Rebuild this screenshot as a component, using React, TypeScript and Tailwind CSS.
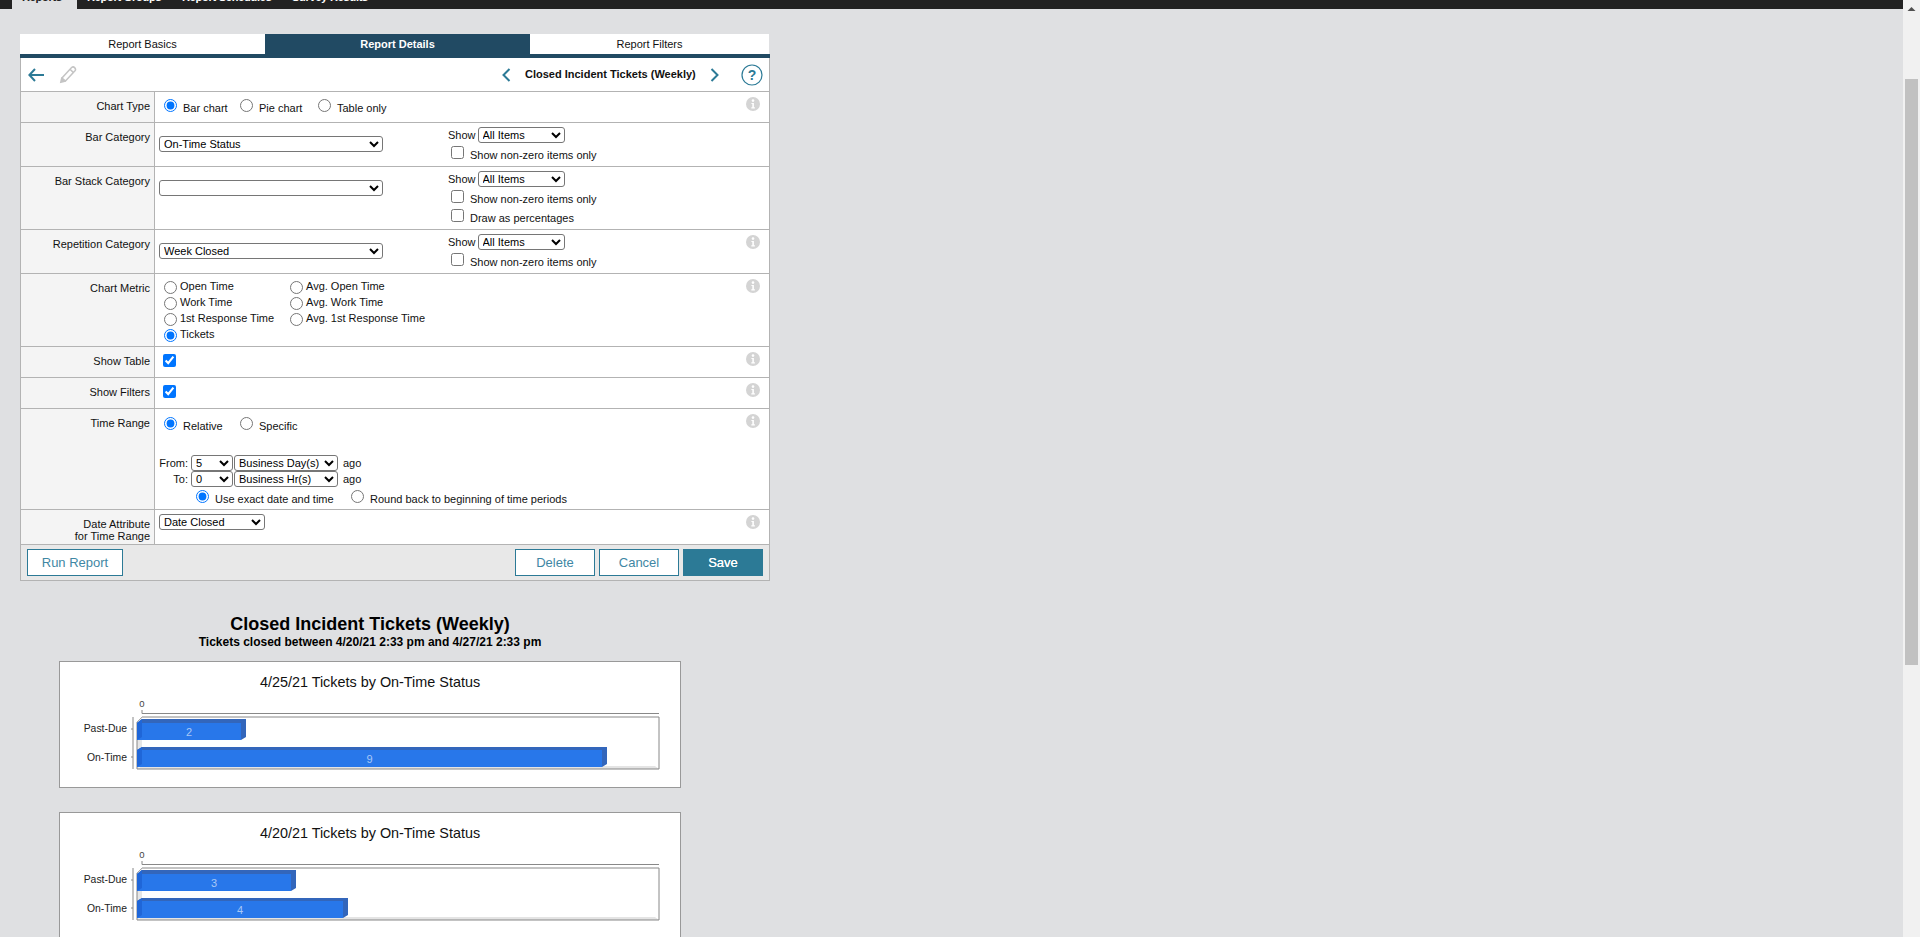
import React from "react";

function Info() {
  return (
    <svg width="14" height="14" viewBox="0 0 14 14" className="block">
      <circle cx="7" cy="7" r="7" fill="#d4d4d4" />
      <circle cx="7" cy="3.6" r="1.3" fill="#fff" />
      <path d="M5.4 5.9h2.5v4.3h1v1.2H5.3v-1.2h1V7.1h-.9z" fill="#fff" />
    </svg>
  );
}

function Row({ label, h, info, children }: { label: React.ReactNode; h: string; info?: boolean; children?: React.ReactNode }) {
  return (
    <div className={`flex border-b border-[#b3b3b3] ${h}`}>
      <div className="w-[134px] shrink-0 border-r border-[#b3b3b3] bg-[#f4f4f4] pr-[4px] pt-[8px] text-right leading-[12px]">{label}</div>
      <div className="relative min-w-0 flex-1">
        {children}
        {info && (
          <div className="absolute right-[9px] top-[5px]">
            <Info />
          </div>
        )}
      </div>
    </div>
  );
}

function Radio({ checked, label, className = "" }: { checked?: boolean; label: string; className?: string }) {
  return (
    <label className={`flex items-start gap-[6px] ${className}`}>
      <input type="radio" defaultChecked={checked} className="m-0 block h-[13px] w-[13px] shrink-0" />
      <span className="mt-[3px] block whitespace-nowrap leading-[13px]">{label}</span>
    </label>
  );
}

function MetricRadio({ checked, label, className = "" }: { checked?: boolean; label: string; className?: string }) {
  return (
    <label className={`flex h-[16px] items-start gap-[3px] ${className}`}>
      <input type="radio" defaultChecked={checked} className="m-0 mt-[1px] block h-[13px] w-[13px] shrink-0" />
      <span className="block whitespace-nowrap leading-[13px]">{label}</span>
    </label>
  );
}

function Check({ label }: { label: string }) {
  return (
    <label className="flex items-start gap-[6px]">
      <input type="checkbox" className="m-0 block h-[13px] w-[13px] shrink-0" />
      <span className="mt-[3px] block whitespace-nowrap leading-[13px]">{label}</span>
    </label>
  );
}

function Select({ value, w }: { value: string; w: string }) {
  return (
    <select
      defaultValue={value}
      className={`m-0 block h-[16px] rounded-[3px] border border-[#767676] bg-white p-0 text-[11px] leading-[14px] text-black ${w}`}
    >
      <option value={value}>{value}</option>
    </select>
  );
}

function ShowBlock({ extra }: { extra?: boolean }) {
  return (
    <div className="w-[200px]">
      <div className="flex items-center gap-[2px]">
        <span className="leading-[16px]">Show</span>
        <Select value="All Items" w="w-[87px]" />
      </div>
      <div className="ml-[3px] mt-[3px]">
        <Check label="Show non-zero items only" />
      </div>
      {extra && (
        <div className="ml-[3px] mt-[3px]">
          <Check label="Draw as percentages" />
        </div>
      )}
    </div>
  );
}

function Chart({ title, bars }: { title: string; bars: { name: string; value: string; right: number }[] }) {
  const L = 77;
  const rows = [
    { label: 67, top: 57, front: 61, bottom: 78 },
    { label: 96, top: 85, front: 88, bottom: 105 },
  ];
  return (
    <div className="ml-[39px] h-[127px] w-[622px] border border-[#999999] bg-white">
      <svg width="620" height="125" viewBox="0 0 620 125" className="block" style={{ fontFamily: '"Liberation Sans", Arial, sans-serif' }}>
        <text x="310" y="25" textAnchor="middle" fontSize="14.4" fill="#111">{title}</text>
        <text x="82" y="45" textAnchor="middle" fontSize="9.5" fill="#444">0</text>
        <path d="M82 48v3.5H599" fill="none" stroke="#888" />
        <path d="M73 55v52M71 67h2M71 95h2" fill="none" stroke="#888" />
        <path d="M77 60l5-5v48l-5 4z" fill="#e6e6e6" />
        <path d="M77 107l5-3H595l4 3z" fill="#e4e4e4" />
        <path d="M77 60l5-5" stroke="#aaa" fill="none" />
        <path d="M82 55H599V107H77V60" fill="none" stroke="#888" />
        {bars.map((b, i) => {
          const r = rows[i];
          return (
            <g key={b.name}>
              <text x="67" y={r.label + 3} textAnchor="end" fontSize="10.4" fill="#222">{b.name}</text>
              <path d={`M${L} ${r.front}l5-${r.front - r.top}H${b.right + 5}V${r.bottom - 3}l-5 3V${r.front}z`} fill="#3366bb" />
              <rect x={L} y={r.front} width={b.right - L} height={r.bottom - r.front} fill="#2877ea" />
              <path d={`M${L} ${r.front}l5-${r.front - r.top}V${r.bottom - 3}l-5 3z`} fill="#1f66d8" />
              <text x={(L + b.right) / 2} y={r.front + 13} textAnchor="middle" fontSize="11" fill="#a8c8f7">{b.value}</text>
            </g>
          );
        })}
      </svg>
    </div>
  );
}

export default function App() {
  return (
    <div className="flex h-[937px] w-[1920px] overflow-hidden bg-[#dfe0e2] font-['Liberation_Sans',Arial,sans-serif] text-[11px] text-[#111]">
      <div className="min-w-0 flex-1">
        <div className="flex h-[9px] items-start overflow-hidden bg-[#222222] pl-[12px] font-bold tracking-[-0.25px] text-white">
          <div className="h-[9px] w-[65px] bg-[#dfe0e2] pl-[10px] text-[#222]">
            <div className="-mt-[9px] leading-[13px]">Reports</div>
          </div>
          <div className="-mt-[9px] ml-[10px] w-[95px] leading-[13px]">Report Groups</div>
          <div className="-mt-[9px] w-[110px] leading-[13px]">Report Schedules</div>
          <div className="-mt-[9px] leading-[13px]">Survey Results</div>
        </div>

        <div className="pl-[20px] pt-[25px]">
          <div className="w-[750px]">
            <div className="flex h-[24px] w-[750px] border-b-[4px] border-[#214a63]">
              <div className="flex h-[20px] w-[245px] items-center justify-center bg-white">Report Basics</div>
              <div className="flex h-[20px] w-[265px] items-center justify-center bg-[#214a63] font-bold text-white">Report Details</div>
              <div className="flex h-[20px] w-[239px] items-center justify-center bg-white">Report Filters</div>
            </div>

            <div className="w-[750px] border-x border-b border-[#b3b3b3] bg-white">
              <div className="flex h-[34px] items-center border-b border-[#b3b3b3]">
                <svg width="16" height="14" viewBox="0 0 16 14" className="ml-[7px]" fill="none" stroke="#2c7a96" strokeWidth="2">
                  <path d="M7 1 1.4 7 7 13M1.4 7H16" />
                </svg>
                <svg width="18" height="18" viewBox="0 0 18 18" className="ml-[15px]" fill="none" stroke="#c4c4c4" strokeWidth="1.5">
                  <path d="M12.6 1.5c1-.8 2.2-.7 3 .1s1.2 2.2.4 3.2L6.5 15 3 12z" />
                  <path d="M11 3.3 14.5 6.6" />
                  <path d="M.8 17.2 2.2 11 7 15.8z" fill="#c4c4c4" stroke="none" />
                </svg>
                <svg width="9" height="14" viewBox="0 0 9 14" className="ml-[425px]" fill="none" stroke="#2c7a96" strokeWidth="2">
                  <path d="M7.5 1 1.5 7l6 6" />
                </svg>
                <span className="ml-[14px] w-[171px] whitespace-nowrap font-bold">Closed Incident Tickets (Weekly)</span>
                <svg width="9" height="14" viewBox="0 0 9 14" className="ml-[14px]" fill="none" stroke="#2c7a96" strokeWidth="2">
                  <path d="M1.5 1l6 6-6 6" />
                </svg>
                <svg width="22" height="22" viewBox="0 0 22 22" className="ml-[22px]">
                  <circle cx="11" cy="11" r="10" fill="#fff" stroke="#2c7a96" strokeWidth="1.2" />
                  <text x="11" y="16" textAnchor="middle" fontSize="14" fontWeight="700" fill="#2c7a96" fontFamily="'Liberation Sans', Arial, sans-serif">?</text>
                </svg>
              </div>

              <Row label="Chart Type" h="h-[31px]" info>
                <div className="flex pl-[9px] pt-[7px]">
                  <Radio checked label="Bar chart" className="w-[76px]" />
                  <Radio label="Pie chart" className="w-[78px]" />
                  <Radio label="Table only" />
                </div>
              </Row>

              <Row label="Bar Category" h="h-[44px]">
                <div className="flex pt-[4px]">
                  <div className="w-[293px] pl-[4px] pt-[9px]">
                    <Select value="On-Time Status" w="w-[224px]" />
                  </div>
                  <ShowBlock />
                </div>
              </Row>

              <Row label="Bar Stack Category" h="h-[63px]">
                <div className="flex pt-[4px]">
                  <div className="w-[293px] pl-[4px] pt-[9px]">
                    <Select value="" w="w-[224px]" />
                  </div>
                  <ShowBlock extra />
                </div>
              </Row>

              <Row label="Repetition Category" h="h-[44px]" info>
                <div className="flex pt-[4px]">
                  <div className="w-[293px] pl-[4px] pt-[9px]">
                    <Select value="Week Closed" w="w-[224px]" />
                  </div>
                  <ShowBlock />
                </div>
              </Row>

              <Row label="Chart Metric" h="h-[73px]" info>
                <div className="flex pl-[9px] pt-[6px]">
                  <div className="w-[126px]">
                    <MetricRadio label="Open Time" />
                    <MetricRadio label="Work Time" />
                    <MetricRadio label="1st Response Time" />
                    <MetricRadio checked label="Tickets" />
                  </div>
                  <div>
                    <MetricRadio label="Avg. Open Time" />
                    <MetricRadio label="Avg. Work Time" />
                    <MetricRadio label="Avg. 1st Response Time" />
                  </div>
                </div>
              </Row>

              <Row label="Show Table" h="h-[31px]" info>
                <div className="pl-[8px] pt-[7px]">
                  <input type="checkbox" defaultChecked className="m-0 block h-[13px] w-[13px]" />
                </div>
              </Row>

              <Row label="Show Filters" h="h-[31px]" info>
                <div className="pl-[8px] pt-[7px]">
                  <input type="checkbox" defaultChecked className="m-0 block h-[13px] w-[13px]" />
                </div>
              </Row>

              <Row label="Time Range" h="h-[101px]" info>
                <div className="flex pl-[9px] pt-[8px]">
                  <Radio checked label="Relative" className="w-[76px]" />
                  <Radio label="Specific" />
                </div>
                <div className="mt-[22px] flex h-[16px] items-center">
                  <span className="w-[33px] text-right">From:</span>
                  <Select value="5" w="ml-[3px] w-[42px]" />
                  <Select value="Business Day(s)" w="ml-[1px] w-[104px]" />
                  <span className="ml-[5px]">ago</span>
                </div>
                <div className="flex h-[16px] items-center">
                  <span className="w-[33px] text-right">To:</span>
                  <Select value="0" w="ml-[3px] w-[42px]" />
                  <Select value="Business Hr(s)" w="ml-[1px] w-[104px]" />
                  <span className="ml-[5px]">ago</span>
                </div>
                <div className="mt-[3px] flex pl-[41px]">
                  <Radio checked label="Use exact date and time" className="w-[155px]" />
                  <Radio label="Round back to beginning of time periods" />
                </div>
              </Row>

              <Row
                label={
                  <>
                    Date Attribute
                    <br />
                    for Time Range
                  </>
                }
                h="h-[35px]"
                info
              >
                <div className="pl-[4px] pt-[4px]">
                  <Select value="Date Closed" w="w-[106px]" />
                </div>
              </Row>

              <div className="flex h-[35px] items-start bg-[#e8e8e8] pl-[6px] pr-[6px] pt-[4px] text-[13px]">
                <button className="h-[27px] w-[96px] border border-[#2c7a96] bg-white text-[#3f87a4]">Run Report</button>
                <button className="ml-auto h-[27px] w-[80px] border border-[#2c7a96] bg-white text-[#3f87a4]">Delete</button>
                <button className="ml-[4px] h-[27px] w-[80px] border border-[#2c7a96] bg-white text-[#3f87a4]">Cancel</button>
                <button className="ml-[4px] h-[27px] w-[80px] bg-[#2c7a96] text-white [text-shadow:0_0_0.6px_white]">Save</button>
              </div>
            </div>
          </div>

          <div className="mt-[33px] w-[700px] text-center text-black">
            <div className="text-[18px] font-bold leading-[21px]">Closed Incident Tickets (Weekly)</div>
            <div className="text-[12px] font-bold leading-[14px]">Tickets closed between 4/20/21 2:33 pm and 4/27/21 2:33 pm</div>
          </div>

          <div className="mt-[12px]">
            <Chart
              title="4/25/21 Tickets by On-Time Status"
              bars={[
                { name: "Past-Due", value: "2", right: 181 },
                { name: "On-Time", value: "9", right: 542 },
              ]}
            />
          </div>
          <div className="mt-[24px]">
            <Chart
              title="4/20/21 Tickets by On-Time Status"
              bars={[
                { name: "Past-Due", value: "3", right: 231 },
                { name: "On-Time", value: "4", right: 283 },
              ]}
            />
          </div>
        </div>
      </div>

      <div className="w-[17px] shrink-0 bg-[#f1f1f1]">
        <svg width="17" height="17" viewBox="0 0 17 17" className="block">
          <path d="M8.5 7 12.5 11h-8z" fill="#505050" />
        </svg>
        <div className="ml-[2px] mt-[62px] h-[586px] w-[13px] bg-[#c1c1c1]" />
      </div>
    </div>
  );
}
